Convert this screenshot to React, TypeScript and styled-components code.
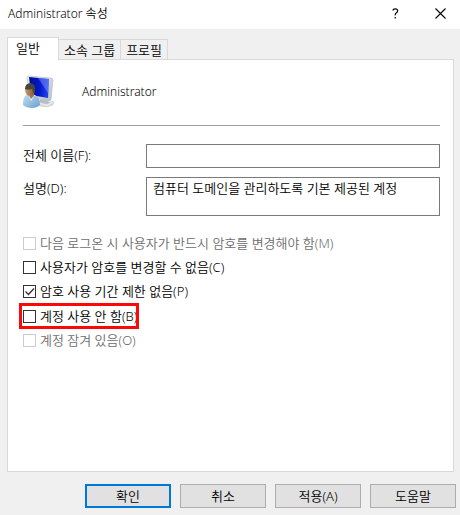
import React from "react";
import styled, { createGlobalStyle } from "styled-components";

const GlobalStyle = createGlobalStyle`
  *, *::before, *::after { box-sizing: border-box; }
  body {
    margin: 0;
    background: #f0f0f0;
    color: #000;
    font: 350 13px/20px "Noto Sans", "Noto Sans CJK KR", sans-serif;
  }
  button, input, textarea { font: inherit; color: inherit; }
`;

const Dialog = styled.main`
  min-height: 100vh;
  display: flex;
  flex-direction: column;
  background: #f0f0f0;
`;

const TitleBar = styled.header`
  display: flex;
  align-items: center;
  height: 29px;
  padding: 0 12px 2px 8px;
  background: #fff;
`;

const Title = styled.h1`
  flex: 1;
  margin: 0;
  font-size: 12px;
  font-weight: inherit;
`;

const CaptionButton = styled.button`
  display: flex;
  align-items: center;
  justify-content: center;
  width: 16px;
  height: 20px;
  margin-left: 29px;
  padding: 0;
  border: 0;
  background: transparent;
`;

const Body = styled.section`
  flex: 1;
  display: flex;
  flex-direction: column;
  padding: 8px 6px 12px 7px;
`;

const Tabs = styled.div`
  display: flex;
  align-items: flex-end;
`;

const Tab = styled.button<{ $active?: boolean }>`
  height: ${(p) => (p.$active ? 23 : 20)}px;
  margin-bottom: ${(p) => (p.$active ? -1 : 0)}px;
  padding: ${(p) => (p.$active ? "0 18px 3px 8px" : "0 5px")};
  border: 1px solid #d9d9d9;
  border-bottom: 0;
  border-left-width: ${(p) => (p.$active ? 1 : 0)}px;
  background: ${(p) => (p.$active ? "#fff" : "#f0f0f0")};
  line-height: 18px;
  white-space: nowrap;
  z-index: 1;
`;

const Panel = styled.div`
  flex: 1;
  padding: 12px 13px 12px 15px;
  border: 1px solid #d9d9d9;
  background: #fff;
`;

const Account = styled.div`
  display: flex;
  align-items: center;
  gap: 27px;
  height: 54px;
  padding-bottom: 14px;
  border-bottom: 1px solid #a0a0a0;
  font-size: 12px;
`;

const Fields = styled.div`
  display: grid;
  grid-template-columns: 123px 1fr;
  row-gap: 9px;
  margin: 18px 0 15px;
`;

const FieldLabel = styled.label`
  line-height: 22px;
`;

const TextBox = styled.input`
  width: 100%;
  min-width: 0;
  height: 24px;
  padding: 0 6px;
  border: 1px solid #7a7a7a;
  border-radius: 0;
  background: #fff;
`;

const Description = styled.textarea`
  display: block;
  width: 100%;
  height: 39px;
  padding: 0 6px;
  border: 1px solid #7a7a7a;
  border-radius: 0;
  background: #fff;
  resize: none;
`;

const Options = styled.div`
  display: flex;
  flex-direction: column;
  align-items: flex-start;
`;

const Option = styled.label<{ $muted?: boolean; $framed?: boolean }>`
  position: relative;
  display: flex;
  align-items: center;
  gap: 4px;
  height: 24px;
  margin-top: ${(p) => (p.$framed ? 1 : 0)}px;
  color: ${(p) => (p.$muted ? "#6d6d6d" : "#000")};
  white-space: nowrap;

  &::after {
    content: "";
    display: ${(p) => (p.$framed ? "block" : "none")};
    position: absolute;
    inset: -1px -2px -1px -4px;
    border: 3px solid #fb0808;
    pointer-events: none;
  }
`;

const Check = styled.input`
  appearance: none;
  width: 13px;
  height: 13px;
  margin: 0;
  border: 1px solid #333;
  background: #fff;

  &:disabled { border-color: #ccc; }
`;

const CheckSlot = styled.span`
  display: grid;

  & > * { grid-area: 1 / 1; }
  & > svg { pointer-events: none; }
  & > input:not(:checked) + svg { visibility: hidden; }
`;

const Actions = styled.footer`
  display: flex;
  justify-content: flex-end;
  gap: 9px;
  padding: 0 4px 7px;
`;

const ActionButton = styled.button<{ $primary?: boolean }>`
  width: 86px;
  height: 24px;
  padding: 0;
  border: ${(p) => (p.$primary ? "2px solid #0078d7" : "1px solid #adadad")};
  background: #e1e1e1;
  line-height: 18px;
`;

function UserIcon() {
  return (
    <svg width="32" height="34" viewBox="0 0 32 34" aria-hidden="true">
      <defs>
        <linearGradient id="screen" x1="0" y1="0" x2="1" y2="0">
          <stop offset="0" stopColor="#000f8a" />
          <stop offset=".55" stopColor="#0418d0" />
          <stop offset="1" stopColor="#2548ee" />
        </linearGradient>
        <linearGradient id="shirt" x1="0" y1="0" x2="1" y2="1">
          <stop offset="0" stopColor="#c3e0f4" />
          <stop offset="1" stopColor="#6c9fcb" />
        </linearGradient>
        <linearGradient id="skin" x1="0" y1="0" x2="1" y2="0">
          <stop offset="0" stopColor="#d0a06c" />
          <stop offset="1" stopColor="#765034" />
        </linearGradient>
        <linearGradient id="bezel" x1="0" y1="0" x2="1" y2="1">
          <stop offset="0" stopColor="#f3f4f5" />
          <stop offset="1" stopColor="#b5bcc4" />
        </linearGradient>
      </defs>
      <ellipse cx="22" cy="29" rx="9" ry="3" fill="#dcdfe2" />
      <path d="M18 23l7 2 1 4-5 2-6-2z" fill="#b7bdc3" />
      <path d="M15 27l9 2 6-3 1 2-7 4-9-3z" fill="#e8eaec" stroke="#b6bbc0" strokeWidth=".5" />
      <path d="M5 1l22 2q3 0 3 2l-2 19q0 2-2 2L7 22 4 3z" fill="url(#bezel)" stroke="#b8c1ca" strokeWidth=".7" />
      <path d="M6 2l20 2-1 19L8 20z" fill="url(#screen)" />
      <path d="M15 3l11 1-1 14z" fill="#9db2ff" opacity=".4" />
      <path d="M0 28q0-8 6-9l6 1q5 2 5 10-3 3-8 3-6 0-9-3z" fill="url(#shirt)" />
      <path d="M5 19l3 7 4-6z" fill="#e9f5fb" />
      <path d="M4 16l7 1v4l-3 3-3-5z" fill="#a7784f" />
      <ellipse cx="7" cy="15" rx="5" ry="6" fill="url(#skin)" />
      <path d="M2 14q0-6 6-6 5 1 4 8l-2 2q0-3-1-4-4 1-7 0z" fill="#484440" />
    </svg>
  );
}

const actions = ["확인", "취소", "적용(A)", "도움말"];

const options = [
  { text: "다음 로그온 시 사용자가 반드시 암호를 변경해야 함(M)", disabled: true },
  { text: "사용자가 암호를 변경할 수 없음(C)" },
  { text: "암호 사용 기간 제한 없음(P)", checked: true },
  { text: "계정 사용 안 함(B)", framed: true },
  { text: "계정 잠겨 있음(O)", disabled: true },
];

export default function App() {
  return (
    <Dialog>
      <GlobalStyle />
      <TitleBar>
        <Title>Administrator 속성</Title>
        <CaptionButton aria-label="도움말">
          <svg width="7" height="11" viewBox="0 0 7 11" fill="none" stroke="#000" strokeWidth="1.2" aria-hidden="true">
            <path d="M1 2.5Q1 .8 3.3.8T5.7 2.8Q5.7 4 4.4 4.8T3.2 7.4M3.2 9v1.6" />
          </svg>
        </CaptionButton>
        <CaptionButton aria-label="닫기">
          <svg width="11" height="11" viewBox="0 0 11 11" stroke="#000" strokeWidth="1.1" aria-hidden="true">
            <path d="M.5.5l10 10M10.5.5l-10 10" />
          </svg>
        </CaptionButton>
      </TitleBar>
      <Body>
        <Tabs role="tablist">
          <Tab role="tab" aria-selected="true" $active>일반</Tab>
          <Tab role="tab" aria-selected="false">소속 그룹</Tab>
          <Tab role="tab" aria-selected="false">프로필</Tab>
        </Tabs>
        <Panel role="tabpanel">
          <Account>
            <UserIcon />
            <span>Administrator</span>
          </Account>
          <Fields>
            <FieldLabel htmlFor="full-name">전체 이름(F):</FieldLabel>
            <TextBox id="full-name" type="text" />
            <FieldLabel htmlFor="description">설명(D):</FieldLabel>
            <Description id="description" defaultValue="컴퓨터 도메인을 관리하도록 기본 제공된 계정" />
          </Fields>
          <Options>
            {options.map((o) => (
              <Option key={o.text} $muted={o.disabled} $framed={o.framed}>
                <CheckSlot>
                  <Check type="checkbox" disabled={o.disabled} defaultChecked={o.checked} />
                  <svg width="13" height="13" viewBox="0 0 13 13" fill="none" stroke="#333" strokeWidth="1.3" aria-hidden="true">
                    <path d="M2.5 6.5l3 3 5.5-6" />
                  </svg>
                </CheckSlot>
                {o.text}
              </Option>
            ))}
          </Options>
        </Panel>
      </Body>
      <Actions>
        {actions.map((a, i) => (
          <ActionButton key={a} type="button" $primary={i === 0}>{a}</ActionButton>
        ))}
      </Actions>
    </Dialog>
  );
}
